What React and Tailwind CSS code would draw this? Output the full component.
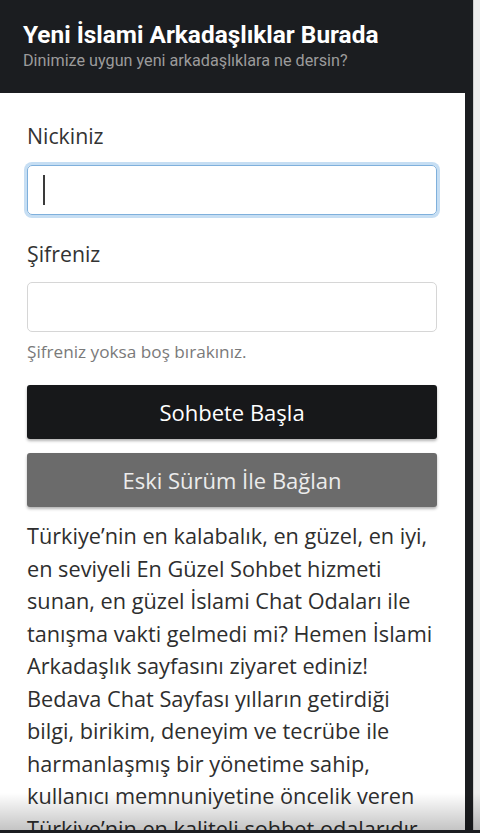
const lines = [
  "Türkiye’nin en kalabalık, en güzel, en iyi,",
  "en seviyeli En Güzel Sohbet hizmeti",
  "sunan, en güzel İslami Chat Odaları ile",
  "tanışma vakti gelmedi mi? Hemen İslami",
  "Arkadaşlık sayfasını ziyaret ediniz!",
  "Bedava Chat Sayfası yılların getirdiği",
  "bilgi, birikim, deneyim ve tecrübe ile",
  "harmanlaşmış bir yönetime sahip,",
  "kullanıcı memnuniyetine öncelik veren",
  "Türkiye’nin en kaliteli sohbet odalarıdır.",
];

export default function App() {
  return (
    <div className="relative w-[480px] h-[833px] overflow-hidden flex bg-[#e9e9e9]">
      <div className="w-[473px] h-full bg-[#1b1d20] flex flex-col">
        <div className="h-[93px] shrink-0 px-[23px] pt-[21px] font-['Roboto',sans-serif]">
          <div className="text-[24.4px] leading-[28px] font-bold text-white whitespace-nowrap">Yeni İslami Arkadaşlıklar Burada</div>
          <div className="mt-[2px] text-[16.2px] leading-[20px] text-[#9b9b9b] whitespace-nowrap">Dinimize uygun yeni arkadaşlıklara ne dersin?</div>
        </div>
        <div className="flex-1 bg-white mr-[8px] pl-[27px] pr-[28px] pt-[28px] font-['Open_Sans',sans-serif] text-[#2b2b2b]">
          <div className="text-[21.3px] leading-[30px] text-[#333]">Nickiniz</div>
          <div className="mt-[14px] h-[50px] rounded-[5px] border border-[#7fb0dc] shadow-[0_0_0_3px_#c6def3] flex items-center pl-[15px]">
            <div className="w-[2px] h-[30px] bg-[#3a3a3a]"></div>
          </div>
          <div className="mt-[24px] text-[21.3px] leading-[30px] text-[#333]">Şifreniz</div>
          <div className="mt-[13px] h-[50px] rounded-[5px] border border-[#d6d6d6]"></div>
          <div className="mt-[9px] text-[17.2px] leading-[22px] text-[#7a7a7a]">Şifreniz yoksa boş bırakınız.</div>
          <button className="mt-[22px] w-full h-[54px] rounded-[3px] bg-[#17181a] text-white text-[22px] shadow-[0_2px_3px_rgba(0,0,0,0.3)]">Sohbete Başla</button>
          <button className="mt-[14px] w-full h-[54px] rounded-[3px] bg-[#6b6b6b] text-[#ececec] text-[22px] shadow-[0_2px_3px_rgba(0,0,0,0.3)]">Eski Sürüm İle Bağlan</button>
          <p className="mt-[13px] text-[21.7px] leading-[32.5px] text-[#2e2e2e]">
            {lines.map((l, i) => (
              <span key={i} className="block whitespace-nowrap">{l}</span>
            ))}
          </p>
        </div>
      </div>
      <div className="w-[7px] h-full bg-[#ececec] border-l border-[#cfcfcf]"></div>
      <div className="absolute left-0 right-0 bottom-0 h-[40px] pointer-events-none bg-gradient-to-b from-[rgba(0,0,0,0)] to-[rgba(0,0,0,0.25)]"></div>
      <div className="absolute left-0 right-0 bottom-0 h-[3px] bg-[#1b1d20]"></div>
    </div>
  );
}
